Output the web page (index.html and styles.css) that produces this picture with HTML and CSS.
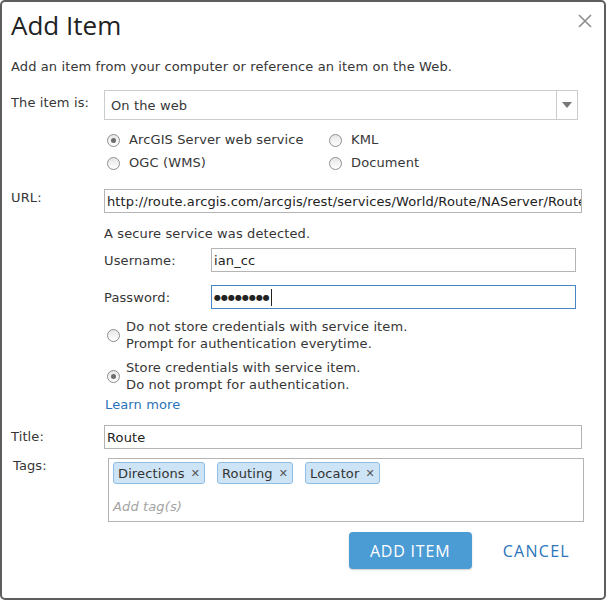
FILE: index.html
```html
<!DOCTYPE html>
<html>
<head>
<meta charset="utf-8">
<link rel="stylesheet" href="styles.css">
</head>
<body>
<div class="dialog">
  <div class="head">
    <h1 class="title">Add Item</h1>
    <span class="close"><svg width="14" height="14" viewBox="0 0 14 14"><path d="M1 1 L13 13 M13 1 L1 13" stroke="#8c8c8c" stroke-width="1.6" fill="none"/></svg></span>
  </div>
  <p class="intro">Add an item from your computer or reference an item on the Web.</p>

  <div class="row row-type">
    <span class="label">The item is:</span>
    <div class="select"><span class="select-text">On the web</span><span class="select-arrow"><svg width="10" height="6" viewBox="0 0 10 6"><path d="M0 0 H10 L5 6 Z" fill="#777"/></svg></span></div>
  </div>

  <div class="radios">
    <span class="opt"><span class="radio checked"></span>ArcGIS Server web service</span>
    <span class="opt"><span class="radio"></span>KML</span>
    <span class="opt"><span class="radio"></span>OGC (WMS)</span>
    <span class="opt"><span class="radio"></span>Document</span>
  </div>

  <div class="row row-url">
    <span class="label">URL:</span>
    <div class="input url">http://route.arcgis.com/arcgis/rest/services/World/Route/NAServer/Route_World</div>
  </div>

  <div class="secure">
    <p class="secure-note">A secure service was detected.</p>
    <div class="cred">
      <span class="cred-label">Username:</span>
      <div class="input cred-input">ian_cc</div>
    </div>
    <div class="cred cred-pass">
      <span class="cred-label">Password:</span>
      <div class="input cred-input focus"><span class="dots">●●●●●●●●</span><span class="caret"></span></div>
    </div>
    <div class="store">
      <span class="radio"></span>
      <span class="store-text">Do not store credentials with service item.<br>Prompt for authentication everytime.</span>
    </div>
    <div class="store">
      <span class="radio checked"></span>
      <span class="store-text">Store credentials with service item.<br>Do not prompt for authentication.</span>
    </div>
    <a class="learn">Learn more</a>
  </div>

  <div class="row row-title">
    <span class="label title-label">Title:</span>
    <div class="input title-input">Route</div>
  </div>

  <div class="row row-tags">
    <span class="label tags-label">Tags:</span>
    <div class="tagbox">
      <div class="chips">
        <span class="chip">Directions<span class="x">✕</span></span>
        <span class="chip">Routing<span class="x">✕</span></span>
        <span class="chip">Locator<span class="x">✕</span></span>
      </div>
      <span class="placeholder">Add tag(s)</span>
    </div>
  </div>

  <div class="actions">
    <span class="btn-primary">ADD ITEM</span>
    <span class="btn-link">CANCEL</span>
  </div>
</div>
</body>
</html>
```

FILE: styles.css
```css
html, body {
  margin: 0;
  padding: 0;
  background: #ffffff;
}
body {
  font-family: "DejaVu Sans", sans-serif;
  font-size: 13px;
  letter-spacing: 0.12px;
  color: #363636;
}
.dialog {
  box-sizing: border-box;
  width: 606px;
  height: 600px;
  border: 2px solid #5e5e5e;
  border-radius: 5px;
  padding: 0 0 0 9px;
}
.head {
  display: flex;
  justify-content: space-between;
  align-items: flex-start;
  padding-top: 7px;
}
.title {
  margin: 0;
  font-family: "Open Sans", sans-serif;
  font-weight: 400;
  font-size: 26px;
  line-height: 32px;
  letter-spacing: 0;
  color: #222;
}
.close {
  margin: 5px 12px 0 0;
  display: flex;
}
.intro {
  margin: 18px 0 0 0;
  line-height: 16px;
}
.row {
  display: flex;
  align-items: flex-start;
}
.label {
  width: 93px;
  flex: none;
}
.row-type {
  margin-top: 15px;
}
.row-type .label {
  padding-top: 5px;
}
.select {
  box-sizing: border-box;
  width: 474px;
  height: 30px;
  border: 1px solid #cccccc;
  display: flex;
  align-items: center;
}
.select-text {
  flex: 1;
  padding-left: 6px;
}
.select-arrow {
  width: 20px;
  height: 28px;
  border-left: 1px solid #cccccc;
  display: flex;
  align-items: center;
  justify-content: center;
}
.radios {
  display: grid;
  grid-template-columns: 222px auto;
  row-gap: 7px;
  margin: 12px 0 0 96px;
}
.opt {
  display: flex;
  align-items: center;
  line-height: 16px;
}
.radio {
  box-sizing: border-box;
  width: 13px;
  height: 13px;
  border-radius: 50%;
  border: 1px solid #8f8f8f;
  background: linear-gradient(#e6e6e6, #ffffff);
  margin-right: 9px;
  flex: none;
  display: inline-flex;
  align-items: center;
  justify-content: center;
}
.radio.checked::after {
  content: "";
  width: 5px;
  height: 5px;
  border-radius: 50%;
  background: #6d6d6d;
}
.row-url {
  margin-top: 18px;
}
.row-url .label {
  padding-top: 1px;
}
.input {
  box-sizing: border-box;
  border: 1px solid #b4b4b4;
  height: 24px;
  line-height: 23px;
  padding-left: 2px;
  white-space: nowrap;
  overflow: hidden;
  color: #222;
}
.url {
  width: 478px;
}
.secure {
  margin-left: 93px;
  display: flex;
  flex-direction: column;
}
.secure-note {
  margin: 13px 0 0 0;
  line-height: 16px;
}
.cred {
  display: flex;
  align-items: center;
  margin-top: 6px;
}
.cred-pass {
  margin-top: 13px;
}
.cred-label {
  width: 107px;
  flex: none;
}
.cred-input {
  width: 365px;
}
.cred-input.focus {
  border-color: #4787c8;
  display: flex;
  align-items: center;
}
.dots {
  font-size: 8px;
  letter-spacing: 0;
  color: #222;
}
.caret {
  width: 1px;
  height: 17px;
  background: #222;
  margin-left: 1px;
}
.store {
  display: flex;
  align-items: center;
  margin-top: 9px;
  padding-left: 3px;
}
.store + .store {
  margin-top: 7px;
}
.store .radio {
  margin-right: 6px;
}
.store-text {
  line-height: 17px;
}
.learn {
  color: #2a74ba;
  margin-top: 4px;
  margin-left: 1px;
  line-height: 16px;
}
.row-title {
  margin-top: 12px;
}
.title-label {
  padding-top: 4px;
}
.title-input {
  width: 478px;
}
.row-tags {
  margin-top: 9px;
}
.tags-label {
  width: 97px;
  padding-left: 2px;
  box-sizing: border-box;
}
.tagbox {
  box-sizing: border-box;
  width: 476px;
  height: 64px;
  border: 1px solid #b4b4b4;
  padding: 3px 4px 0 4px;
  display: flex;
  flex-direction: column;
}
.chips {
  display: flex;
  gap: 12px;
}
.chip {
  box-sizing: border-box;
  height: 22px;
  background: #cde4f6;
  border: 1px solid #8ebde4;
  border-radius: 3px;
  padding: 0 4px;
  display: flex;
  align-items: center;
  color: #333;
}
.x {
  margin-left: 6px;
  font-size: 11px;
  font-weight: bold;
  color: #555;
}
.placeholder {
  margin-top: 15px;
  color: #a3a3a3;
  font-style: italic;
}
.actions {
  display: flex;
  align-items: center;
  justify-content: flex-end;
  margin-top: 10px;
  padding-right: 34px;
  gap: 31px;
}
.btn-primary {
  box-sizing: border-box;
  width: 123px;
  height: 37px;
  background: #4b9bd5;
  color: #ffffff;
  border-radius: 4px;
  display: flex;
  align-items: center;
  justify-content: center;
  font-family: "Open Sans", sans-serif;
  font-size: 16px;
  letter-spacing: 0.8px;
  box-shadow: 0 1px 2px rgba(0,0,0,0.2);
}
.btn-link {
  color: #2a74ba;
  font-family: "Open Sans", sans-serif;
  font-size: 16px;
  letter-spacing: 1.3px;
}
```
